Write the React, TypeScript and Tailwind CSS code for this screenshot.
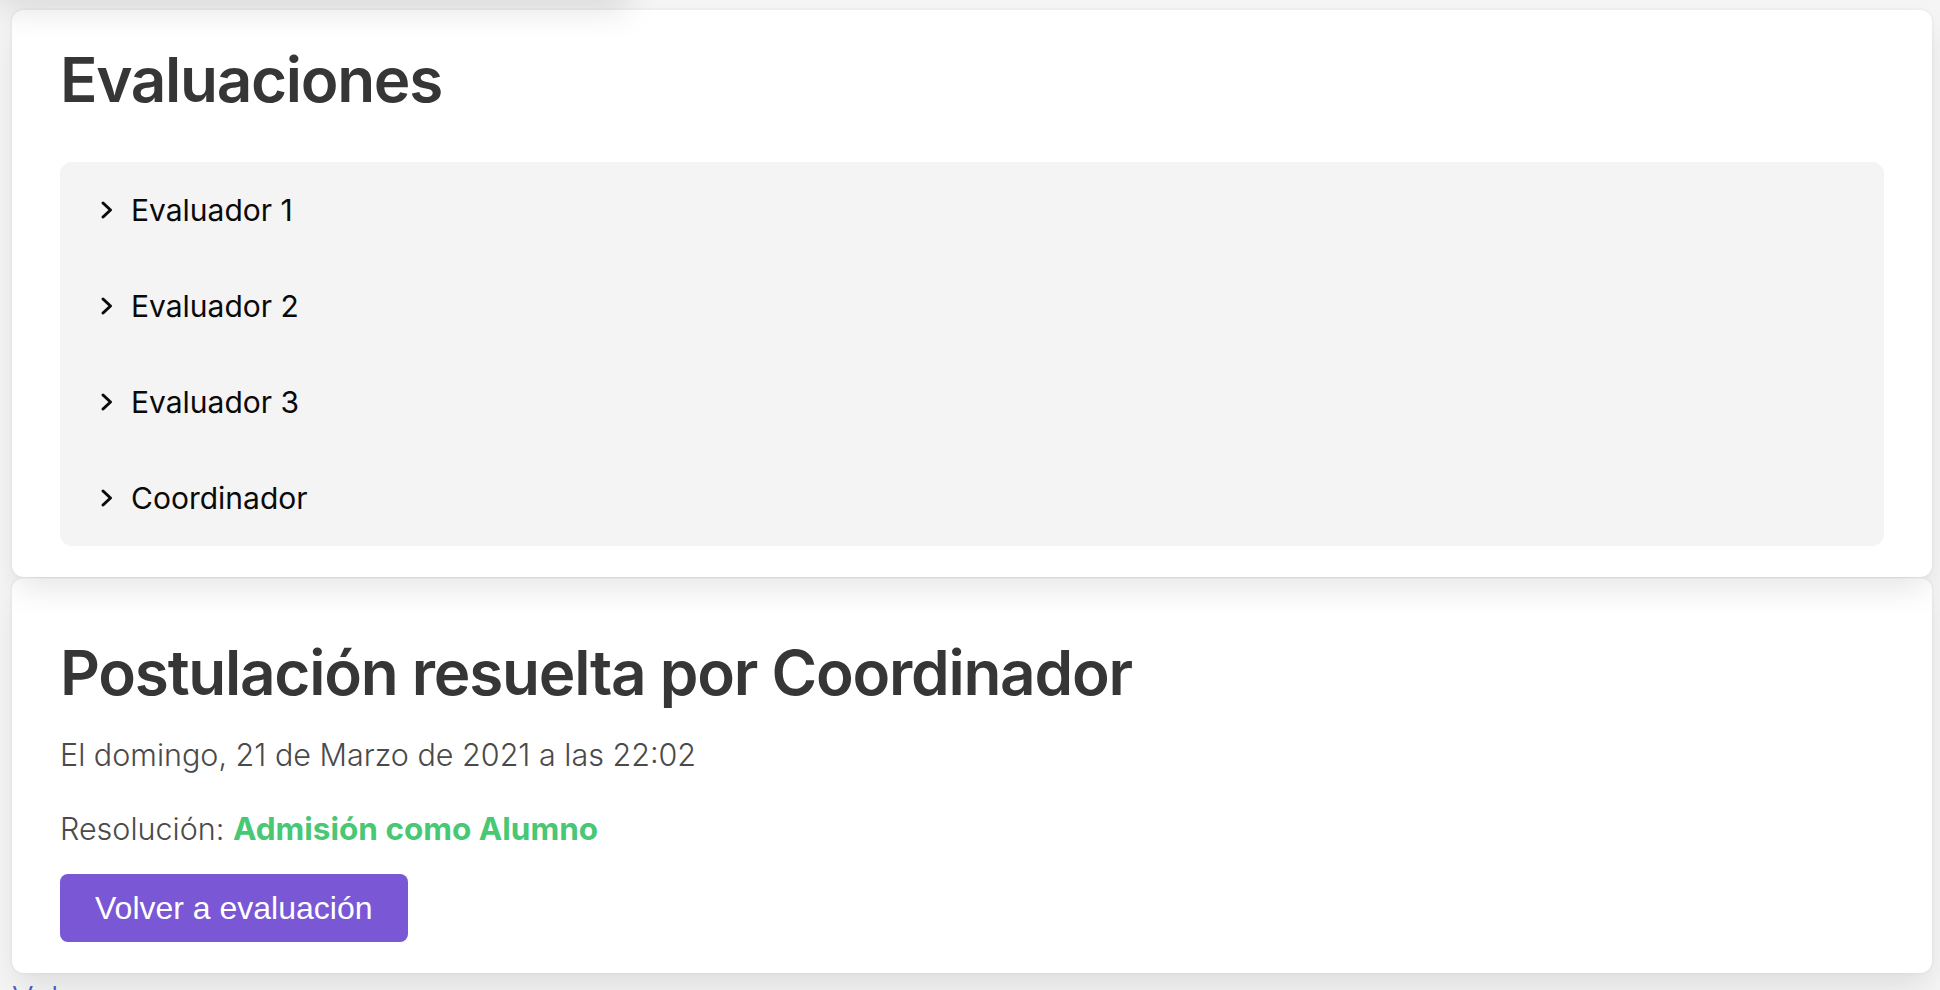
import React from "react";

function Chevron() {
  return (
    <svg width="14" height="20" viewBox="0 0 14 20" className="shrink-0">
      <path
        d="M3 3 L10.5 10 L3 17"
        fill="none"
        stroke="#0a0a0a"
        strokeWidth="3"
        strokeLinecap="round"
        strokeLinejoin="round"
      />
    </svg>
  );
}

const rows = ["Evaluador 1", "Evaluador 2", "Evaluador 3", "Coordinador"];

const boxShadow =
  "shadow-[0_16px_32px_-4px_rgba(10,10,10,0.1),0_0_0_2px_rgba(10,10,10,0.02)]";

export default function App() {
  return (
    <div className="h-screen overflow-hidden bg-[#f5f5f5] pl-[12px] pr-[8px] font-['Inter','Liberation_Sans',sans-serif]">
      <div className="relative z-20 -ml-[20px] -mt-[100px] h-[100px] w-[640px] rounded-[12px] bg-white shadow-[0_16px_32px_-4px_rgba(10,10,10,0.1)]" />
      <div className={`relative z-10 mt-[10px] rounded-[12px] bg-white px-[48px] pt-[34px] pb-[31px] ${boxShadow}`}>
        <h1 className="mb-[46px] text-[62px] font-semibold leading-[72px] tracking-[-0.021em] text-[#363636]">
          Evaluaciones
        </h1>
        <div className="flex flex-col rounded-[12px] bg-[#f4f4f4] pl-[40px]">
          {rows.map((r) => (
            <div key={r} className="flex h-[96px] items-center gap-[17px]">
              <Chevron />
              <span className="text-[30px] font-normal leading-[48px] text-[#0a0a0a]">
                {r}
              </span>
            </div>
          ))}
        </div>
      </div>
      <div className={`relative mt-[1px] rounded-[12px] bg-white px-[48px] pt-[59px] pb-[31px] ${boxShadow}`}>
        <h2 className="text-[62px] font-semibold leading-[72px] tracking-[-0.02em] text-[#363636]">
          Postulación resuelta por Coordinador
        </h2>
        <p className="mt-[22px] text-[30.5px] font-light leading-[48px] text-[#4a4a4a]">
          El domingo, 21 de Marzo de 2021 a las 22:02
        </p>
        <p className="mt-[26px] text-[30.5px] font-light leading-[48px] text-[#4a4a4a]">
          Resolución:{" "}
          <span className="text-[31.5px] font-bold text-[#48c774]">Admisión como Alumno</span>
        </p>
        <button className="mt-[21px] flex h-[68px] items-center rounded-[8px] bg-[#7957d5] px-[35px] font-['Liberation_Sans',Arial,sans-serif] text-[32px] text-white">
          Volver a evaluación
        </button>
      </div>
      <div className="mt-[2px] text-[32px] font-light leading-[48px] text-[#485fc7]">
        Volver
      </div>
    </div>
  );
}
